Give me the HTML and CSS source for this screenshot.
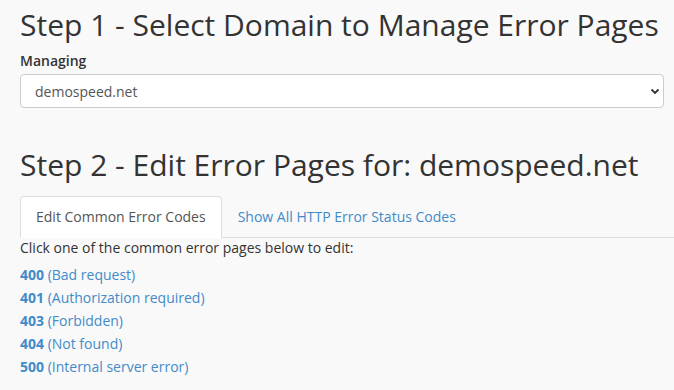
FILE: index.html
```html
<!DOCTYPE html>
<html lang="en">

<head>
	<meta charset="UTF-8">
	<title>Error Pages</title>
	<link rel="stylesheet" href="styles.css">
</head>

<body>
	<div class="page">
		<h1>Step 1 - Select Domain to Manage Error Pages</h1>
		<div class="form-group">
			<label for="domain">Managing</label>
			<div class="select-wrap">
				<select id="domain">
					<option>demospeed.net</option>
				</select>
				<svg class="caret" width="10" height="7" viewBox="0 0 10 7">
					<path d="M1.5 1.5 L5 5 L8.5 1.5" fill="none" stroke="#333" stroke-width="1.8"/>
				</svg>
			</div>
		</div>

		<h1 class="step2">Step 2 - Edit Error Pages for: demospeed.net</h1>
		<ul class="tabs">
			<li class="tab active">Edit Common Error Codes</li>
			<li class="tab"><a href="#">Show All HTTP Error Status Codes</a></li>
		</ul>
		<p class="hint">Click one of the common error pages below to edit:</p>
		<ul class="codes">
			<li><a href="#"><b>400</b> (Bad request)</a></li>
			<li><a href="#"><b>401</b> (Authorization required)</a></li>
			<li><a href="#"><b>403</b> (Forbidden)</a></li>
			<li><a href="#"><b>404</b> (Not found)</a></li>
			<li><a href="#"><b>500</b> (Internal server error)</a></li>
		</ul>
	</div>
</body>

</html>
```

FILE: styles.css
```css
body {
	margin: 0;
	background: #f9f9f9;
	color: #333;
	font-family: "Open Sans", Arial, sans-serif;
	font-size: 14px;
}

.page {
	padding: 8px 10px 0 20px;
}

h1 {
	font-size: 30px;
	font-weight: 400;
	line-height: 1.1;
	margin: 0 0 10px;
}

.step2 {
	margin-top: 40px;
	margin-bottom: 15px;
}

label {
	display: block;
	font-weight: 600;
	margin-bottom: 4px;
}

.select-wrap {
	position: relative;
}

select {
	width: 100%;
	height: 34px;
	padding: 0 14px;
	font-family: inherit;
	font-size: 14px;
	color: #555;
	background: #fff;
	border: 1px solid #ccc;
	border-radius: 4px;
	appearance: none;
}

.caret {
	position: absolute;
	right: 4px;
	top: 14px;
}

.tabs {
	display: flex;
	list-style: none;
	margin: 0 -10px 0 0;
	padding: 0;
	border-bottom: 1px solid #ddd;
}

.tab {
	padding: 10px 15px;
	line-height: 20px;
	margin-bottom: -1px;
	border: 1px solid transparent;
	border-radius: 4px 4px 0 0;
}

.tab.active {
	background: #fff;
	border-color: #ddd #ddd transparent;
	color: #555;
}

a {
	color: #428bca;
	text-decoration: none;
}

.hint {
	margin: 0 0 5px;
	line-height: 20px;
}

.codes {
	list-style: none;
	margin: 0;
	padding: 0;
}

.codes li {
	line-height: 23px;
}
```
